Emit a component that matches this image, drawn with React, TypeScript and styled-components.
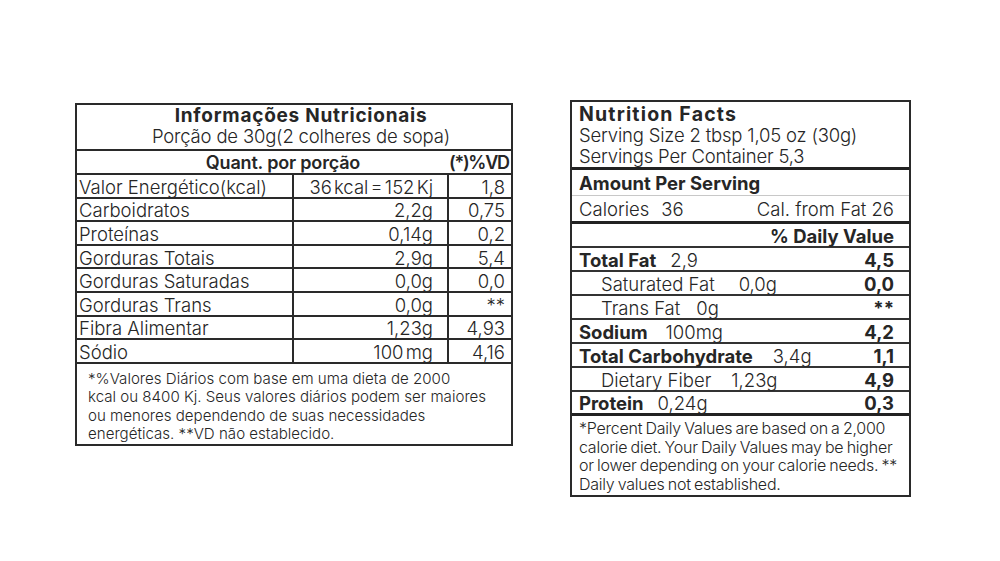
import React from "react";
import styled, { createGlobalStyle } from "styled-components";

const Global = createGlobalStyle`
  html, body { margin: 0; padding: 0; background: #fff; }
  body { font-family: "Inter", "Noto Sans", sans-serif; color: #262626; }
`;

const Page = styled.div`
  width: 1000px;
  height: 561px;
  display: flex;
  align-items: flex-start;
  padding: 100px 0 0 75px;
  box-sizing: border-box;
  gap: 57px;
`;

const LeftBox = styled.div`
  margin-top: 3px;
  width: 438px;
  border: 2px solid #2a2a2a;
  box-sizing: border-box;
`;

const LTitleBlock = styled.div`
  height: 46px;
  display: flex;
  flex-direction: column;
  align-items: center;
  justify-content: center;
  border-bottom: 2px solid #2a2a2a;
  line-height: 20px;
  padding: 0 0 3px 14px;
  box-sizing: border-box;
`;

const LTitle = styled.div`
  font-weight: 700;
  font-size: 19px;
  letter-spacing: 0.04em;
`;

const LSub = styled.div`
  font-size: 18.5px;
  font-weight: 300;
  letter-spacing: -0.01em;
`;

const LHead = styled.div`
  height: 22px;
  display: grid;
  grid-template-columns: 372px 1fr;
  align-items: center;
  border-bottom: 2px solid #2a2a2a;
  font-weight: 600;
  font-size: 18px;
  letter-spacing: -0.01em;
`;

const LHeadMain = styled.div`
  text-align: center;
  padding-left: 40px;
`;

const LHeadVD = styled.div`
  text-align: right;
  padding-right: 5px;
  letter-spacing: -0.07em;
`;

const LRow = styled.div`
  height: 21.6px;
  display: grid;
  grid-template-columns: 215px 155px 1fr;
  border-bottom: 2px solid #2a2a2a;
  font-size: 18.5px;
  font-weight: 300;
  line-height: 20px;
`;

const LCell = styled.div<{ $align?: "left" | "right" }>`
  height: 100%;
  display: flex;
  align-items: center;
  justify-content: ${(p) => (p.$align === "right" ? "flex-end" : "flex-start")};
  padding: ${(p) => (p.$align === "right" ? "1px 14px 0 0" : "1px 0 0 2px")};
  white-space: nowrap;
  & + & {
    border-left: 2px solid #2a2a2a;
  }
`;

const LAmount = styled(LCell)`
  word-spacing: -3px;
`;

const LVd = styled(LCell)`
  padding-right: 6px;
`;

const LFoot = styled.div`
  padding: 6px 8px 0 11px;
  font-size: 15.1px;
  font-weight: 300;
  line-height: 18.5px;
  white-space: nowrap;
`;

const RightBox = styled.div`
  width: 341px;
  border: 2px solid #2a2a2a;
  box-sizing: border-box;
`;

const RTitleBlock = styled.div`
  height: 68px;
  padding: 2px 0 0 7px;
  box-sizing: border-box;
  border-bottom: 3px solid #222;
  line-height: 21px;
`;

const RTitle = styled.div`
  font-weight: 700;
  font-size: 19.5px;
  letter-spacing: 0.06em;
`;

const RText = styled.div`
  font-size: 18.5px;
  font-weight: 300;
  letter-spacing: -0.01em;
`;

const RRow = styled.div<{ $h: number; $line: string; $indent?: boolean }>`
  height: ${(p) => p.$h}px;
  box-sizing: border-box;
  display: flex;
  align-items: center;
  justify-content: space-between;
  padding: 1px 15px 0 ${(p) => (p.$indent ? "29px" : "7px")};
  border-bottom: ${(p) => p.$line};
  font-size: 18.5px;
  font-weight: 300;
  white-space: nowrap;
`;

const Bold = styled.span`
  font-weight: 700;
  letter-spacing: 0;
`;

const Amt = styled.span<{ $gap?: number }>`
  margin-left: ${(p) => p.$gap ?? 8}px;
`;

const RVal = styled.span`
  font-weight: 700;
`;

const RFoot = styled.div`
  padding: 3px 6px 2px 7px;
  font-size: 16px;
  font-weight: 300;
  line-height: 18.5px;
  letter-spacing: -0.015em;
  word-spacing: -1px;
  white-space: nowrap;
`;

const leftRows: [string, string, string][] = [
  ["Valor Energético(kcal)", "36 kcal = 152 Kj", "1,8"],
  ["Carboidratos", "2,2g", "0,75"],
  ["Proteínas", "0,14g", "0,2"],
  ["Gorduras Totais", "2,9g", "5,4"],
  ["Gorduras Saturadas", "0,0g", "0,0"],
  ["Gorduras Trans", "0,0g", "**"],
  ["Fibra Alimentar", "1,23g", "4,93"],
  ["Sódio", "100 mg", "4,16"],
];

type RItem = { label: string; amt: string; vd: string; bold: boolean; indent?: boolean; gap: number };

const rightRows: RItem[] = [
  { label: "Total Fat", amt: "2,9", vd: "4,5", bold: true, gap: 14 },
  { label: "Saturated Fat", amt: "0,0g", vd: "0,0", bold: false, indent: true, gap: 24 },
  { label: "Trans Fat", amt: "0g", vd: "**", bold: false, indent: true, gap: 16 },
  { label: "Sodium", amt: "100mg", vd: "4,2", bold: true, gap: 18 },
  { label: "Total Carbohydrate", amt: "3,4g", vd: "1,1", bold: true, gap: 20 },
  { label: "Dietary Fiber", amt: "1,23g", vd: "4,9", bold: false, indent: true, gap: 20 },
  { label: "Protein", amt: "0,24g", vd: "0,3", bold: true, gap: 14 },
];

export default function App() {
  return (
    <>
      <Global />
      <Page>
        <LeftBox>
          <LTitleBlock>
            <LTitle>Informações Nutricionais</LTitle>
            <LSub>Porção de 30g(2 colheres de sopa)</LSub>
          </LTitleBlock>
          <LHead>
            <LHeadMain>Quant. por porção</LHeadMain>
            <LHeadVD>(*)%VD</LHeadVD>
          </LHead>
          {leftRows.map(([a, b, c]) => (
            <LRow key={a}>
              <LCell>{a}</LCell>
              <LAmount $align="right">{b}</LAmount>
              <LVd $align="right">{c}</LVd>
            </LRow>
          ))}
          <LFoot>
            *%Valores Diários com base em uma dieta de 2000
            <br />
            kcal ou 8400 Kj. Seus valores diários podem ser maiores
            <br />
            ou menores dependendo de suas necessidades
            <br />
            energéticas. **VD não establecido.
          </LFoot>
        </LeftBox>

        <RightBox>
          <RTitleBlock>
            <RTitle>Nutrition Facts</RTitle>
            <RText>Serving Size 2 tbsp 1,05 oz (30g)</RText>
            <RText>Servings Per Container 5,3</RText>
          </RTitleBlock>
          <RRow $h={26} $line="1px solid #c8c8c8">
            <Bold>Amount Per Serving</Bold>
          </RRow>
          <RRow $h={28} $line="3px solid #222">
            <span>
              Calories<Amt $gap={12}>36</Amt>
            </span>
            <span>Cal. from Fat 26</span>
          </RRow>
          <RRow $h={24} $line="2px solid #333">
            <span />
            <Bold>% Daily Value</Bold>
          </RRow>
          {rightRows.map((r, i) => (
            <RRow
              key={r.label}
              $h={24}
              $indent={r.indent}
              $line={i === rightRows.length - 1 ? "3px solid #222" : "2px solid #333"}
            >
              <span>
                {r.bold ? <Bold>{r.label}</Bold> : r.label}
                <Amt $gap={r.gap}>{r.amt}</Amt>
              </span>
              <RVal>{r.vd}</RVal>
            </RRow>
          ))}
          <RFoot>
            *Percent Daily Values are based on a 2,000
            <br />
            calorie diet. Your Daily Values may be higher
            <br />
            or lower depending on your calorie needs. **
            <br />
            Daily values not established.
          </RFoot>
        </RightBox>
      </Page>
    </>
  );
}
